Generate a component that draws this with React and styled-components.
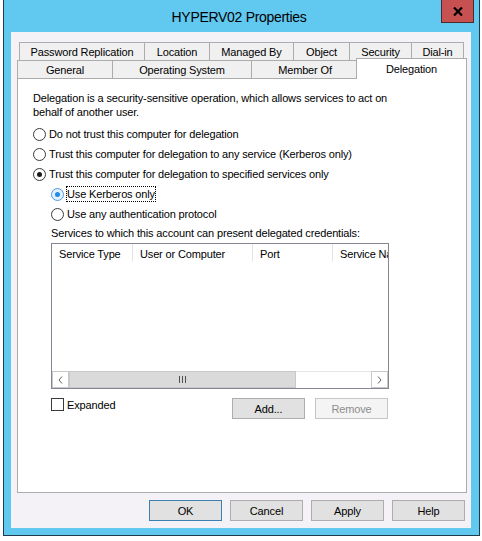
import React from 'react';
import styled, { createGlobalStyle } from 'styled-components';

const GlobalStyle = createGlobalStyle`
  html, body { margin: 0; padding: 0; background: #ffffff; }
  body {
    font-family: "Liberation Sans", Arial, sans-serif;
    font-size: 11px;
    letter-spacing: -0.15px;
    color: #000;
  }
  * { box-sizing: border-box; }
`;

const Page = styled.div`
  width: 482px;
  height: 541px;
  padding-left: 3px;
`;

const Window = styled.div`
  width: 477px;
  height: 536px;
  background: #61c8f0;
  border: 1px solid #1f3c4d;
  border-top: none;
  display: flex;
  flex-direction: column;
`;

const TitleBar = styled.div`
  height: 32px;
  flex: none;
  display: grid;
  grid-template-columns: 1fr auto 1fr;
  padding-right: 5px;
`;

const Title = styled.div`
  grid-column: 2;
  align-self: center;
  padding-top: 2px;
  font-size: 14px;
  letter-spacing: -0.3px;
  white-space: nowrap;
`;

const CloseButton = styled.div`
  grid-column: 3;
  justify-self: end;
  align-self: start;
  width: 33px;
  height: 23px;
  background: #c75050;
  border: 1px solid #4a2b2b;
  border-top: none;
  display: flex;
  align-items: center;
  justify-content: center;
`;

const Client = styled.div`
  flex: 1;
  margin: 0 8px 7px 7px;
  background: #f4f2f6;
  padding: 10px 4px 7px 6px;
  display: flex;
  flex-direction: column;
`;

const TabStrip = styled.div`
  display: flex;
  flex-direction: column;
`;

const TabRow = styled.div`
  display: flex;
  align-items: flex-end;
  height: 18px;
  padding-left: ${p => p.$indent || 0}px;
`;

const Tab = styled.div`
  flex: none;
  width: ${p => p.$w}px;
  height: ${p => (p.$selected ? 21 : 18)}px;
  margin: ${p => (p.$selected ? '0 0 -1px -2px' : '0')};
  position: ${p => (p.$selected ? 'relative' : 'static')};
  z-index: ${p => (p.$selected ? 1 : 'auto')};
  background: ${p => (p.$selected ? '#ffffff' : '#f0f0f0')};
  border: 1px solid #acacac;
  border-bottom: none;
  border-right-width: ${p => (p.$last || p.$selected ? 1 : 0)}px;
  display: flex;
  align-items: center;
  justify-content: center;
  white-space: nowrap;
`;

const Panel = styled.div`
  height: 415px;
  flex: none;
  background: #ffffff;
  border: 1px solid #acacac;
  padding: 12px 15px 0;
  display: flex;
  flex-direction: column;
`;

const Intro = styled.p`
  margin: 0;
  max-width: 372px;
  line-height: 14px;
`;

const OptionList = styled.div`
  margin-top: 5px;
  display: flex;
  flex-direction: column;
`;

const OptionRow = styled.label`
  height: 20px;
  display: flex;
  align-items: center;
  gap: 3px;
  padding-left: ${p => (p.$nested ? 18 : 0)}px;
  white-space: nowrap;
`;

const RadioDot = styled.span`
  flex: none;
  width: 13px;
  height: 13px;
  border-radius: 50%;
  border: 1px solid ${p => (p.$focused ? '#4f9be0' : '#3a3a3a')};
  background: ${p => (p.$focused ? '#e3f1fd' : '#ffffff')};
  display: flex;
  align-items: center;
  justify-content: center;
  &::after {
    content: '';
    display: ${p => (p.$checked ? 'block' : 'none')};
    width: 5px;
    height: 5px;
    border-radius: 50%;
    background: ${p => (p.$focused ? '#1f8be8' : '#1a1a1a')};
  }
`;

const OptionText = styled.span`
  line-height: 14px;
  outline: ${p => (p.$focused ? '1px dotted #000' : 'none')};
`;

const Indented = styled.div`
  margin-left: 18px;
  width: 338px;
`;

const ListLabel = styled.div`
  margin-top: 2px;
  line-height: 14px;
  white-space: nowrap;
`;

const ListView = styled.div`
  margin-top: 3px;
  height: 146px;
  border: 1px solid #828790;
  background: #ffffff;
  display: flex;
  flex-direction: column;
  overflow: hidden;
`;

const HeaderRow = styled.div`
  height: 18px;
  flex: none;
  display: flex;
`;

const HeaderCell = styled.div`
  flex: none;
  width: ${p => p.$w}px;
  border-right: 1px solid #e5e5e5;
  padding: 3px 0 0 7px;
  line-height: 14px;
  white-space: nowrap;
  overflow: hidden;
`;

const ListBody = styled.div`
  flex: 1;
`;

const HScroll = styled.div`
  height: 17px;
  flex: none;
  display: flex;
  background: #ffffff;
`;

const ScrollArrow = styled.div`
  flex: none;
  width: 17px;
  border: 1px solid #c8c8c8;
  display: flex;
  align-items: center;
  justify-content: center;
`;

const ScrollThumb = styled.div`
  flex: none;
  width: 227px;
  background: #dadada;
  border: 1px solid #c8c8c8;
  display: flex;
  align-items: center;
  justify-content: center;
  gap: 2px;
`;

const Track = styled.div`
  flex: 1;
  border-top: 1px solid #e6e6e6;
`;

const Grip = styled.span`
  width: 1px;
  height: 7px;
  background: #505050;
`;

const ActionRow = styled.div`
  margin-top: 9px;
  display: flex;
  align-items: flex-start;
  padding-right: 1px;
`;

const CheckRow = styled.label`
  display: flex;
  align-items: flex-start;
  gap: 3px;
  flex: 1;
`;

const CheckBox = styled.span`
  flex: none;
  width: 13px;
  height: 13px;
  border: 1px solid #3a3a3a;
  background: #ffffff;
`;

const CheckText = styled.span`
  line-height: 14px;
`;

const ButtonGroup = styled.div`
  display: flex;
  gap: ${p => p.$gap}px;
`;

const Button = styled.button`
  width: 73px;
  height: 21px;
  padding: 0;
  font: inherit;
  letter-spacing: inherit;
  background: ${p => (p.disabled ? '#f4f4f4' : '#e1e1e1')};
  color: ${p => (p.disabled ? '#8c8c8c' : '#000')};
  border: 1px solid ${p => (p.$default ? '#3c7fb1' : p.disabled ? '#c6c6c6' : '#adadad')};
  border-radius: 0;
`;

const DialogButtons = styled.div`
  margin-top: 7px;
  display: flex;
  justify-content: flex-end;
  gap: 8px;
  padding-right: 2px;
`;

const topTabs = [
  { label: 'Password Replication', w: 125 },
  { label: 'Location', w: 65 },
  { label: 'Managed By', w: 84 },
  { label: 'Object', w: 56 },
  { label: 'Security', w: 62 },
  { label: 'Dial-in', w: 53 },
];

const bottomTabs = [
  { label: 'General', w: 95 },
  { label: 'Operating System', w: 139 },
  { label: 'Member Of', w: 107 },
  { label: 'Delegation', w: 111, selected: true },
];

const options = [
  { label: 'Do not trust this computer for delegation' },
  { label: 'Trust this computer for delegation to any service (Kerberos only)' },
  { label: 'Trust this computer for delegation to specified services only', checked: true },
  { label: 'Use Kerberos only', checked: true, focused: true, nested: true },
  { label: 'Use any authentication protocol', nested: true },
];

const columns = [
  { label: 'Service Type', w: 81 },
  { label: 'User or Computer', w: 120 },
  { label: 'Port', w: 80 },
  { label: 'Service Name', w: 120 },
];

const Chevron = ({ dir }) => (
  <svg width="5" height="8" viewBox="0 0 5 8">
    <polyline
      points={dir === 'left' ? '4,0.5 1,4 4,7.5' : '1,0.5 4,4 1,7.5'}
      fill="none"
      stroke="#606060"
      strokeWidth="1"
    />
  </svg>
);

export default function App() {
  return (
    <>
      <GlobalStyle />
      <Page>
        <Window>
          <TitleBar>
            <Title>HYPERV02 Properties</Title>
            <CloseButton>
              <svg width="10" height="9" viewBox="0 0 10 9">
                <path d="M1 0.5 L9 8.5 M9 0.5 L1 8.5" stroke="#000" strokeWidth="2.2" />
              </svg>
            </CloseButton>
          </TitleBar>
          <Client>
            <TabStrip>
              <TabRow $indent={2}>
                {topTabs.map((t, i) => (
                  <Tab key={t.label} $w={t.w} $last={i === topTabs.length - 1}>
                    {t.label}
                  </Tab>
                ))}
              </TabRow>
              <TabRow>
                {bottomTabs.map(t => (
                  <Tab key={t.label} $w={t.w} $selected={t.selected}>
                    {t.label}
                  </Tab>
                ))}
              </TabRow>
            </TabStrip>
            <Panel>
              <Intro>
                Delegation is a security-sensitive operation, which allows services to act on behalf of another user.
              </Intro>
              <OptionList>
                {options.map(o => (
                  <OptionRow key={o.label} $nested={o.nested}>
                    <RadioDot $checked={o.checked} $focused={o.focused} />
                    <OptionText $focused={o.focused}>{o.label}</OptionText>
                  </OptionRow>
                ))}
              </OptionList>
              <Indented>
                <ListLabel>Services to which this account can present delegated credentials:</ListLabel>
                <ListView>
                  <HeaderRow>
                    {columns.map(c => (
                      <HeaderCell key={c.label} $w={c.w}>{c.label}</HeaderCell>
                    ))}
                  </HeaderRow>
                  <ListBody />
                  <HScroll>
                    <ScrollArrow><Chevron dir="left" /></ScrollArrow>
                    <ScrollThumb>
                      <Grip /><Grip /><Grip />
                    </ScrollThumb>
                    <Track />
                    <ScrollArrow><Chevron dir="right" /></ScrollArrow>
                  </HScroll>
                </ListView>
                <ActionRow>
                  <CheckRow>
                    <CheckBox />
                    <CheckText>Expanded</CheckText>
                  </CheckRow>
                  <ButtonGroup $gap={10}>
                    <Button>Add...</Button>
                    <Button disabled>Remove</Button>
                  </ButtonGroup>
                </ActionRow>
              </Indented>
            </Panel>
            <DialogButtons>
              <Button $default>OK</Button>
              <Button>Cancel</Button>
              <Button>Apply</Button>
              <Button>Help</Button>
            </DialogButtons>
          </Client>
        </Window>
      </Page>
    </>
  );
}
